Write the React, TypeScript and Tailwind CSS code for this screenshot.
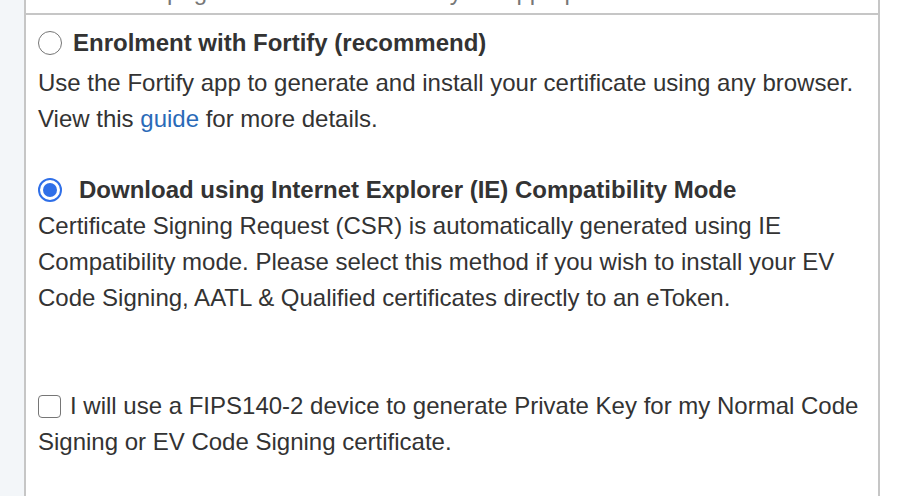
import React from "react";

const font = { fontFamily: '"Liberation Sans", Arial, sans-serif' };

function Radio({ checked }: { checked?: boolean }) {
  if (checked) {
    return (
      <span className="inline-flex h-[24px] w-[24px] shrink-0 items-center justify-center rounded-full border-[2px] border-[#2f6fe8] bg-white">
        <span className="h-[14px] w-[14px] rounded-full bg-[#2f6fe8]" />
      </span>
    );
  }
  return <span className="inline-block h-[24px] w-[24px] shrink-0 rounded-full border-[1.5px] border-[#767676] bg-white" />;
}

export default function App() {
  return (
    <div className="flex h-[496px] w-[912px] overflow-hidden bg-white text-[#333]" style={font}>
      <div className="w-[26px] shrink-0 border-r-2 border-[#c6c6c6] bg-[#f3f6f9]" />
      <div className="flex w-[854px] shrink-0 flex-col border-r-2 border-[#c6c6c6]">
        <div className="flex h-[15px] items-end overflow-hidden border-b-2 border-[#c6c6c6] px-[12px]">
          <div className="mb-[7px] whitespace-nowrap text-[24px] leading-[28px] text-[#777]">
            Code : This page will be reloaded with your appropriate account.
          </div>
        </div>
        <div className="px-[12px] pt-[10px] text-[24px] leading-[36px]">
          <div className="mb-[4px] flex items-center">
            <Radio />
            <span className="ml-[11px] font-bold">Enrolment with Fortify (recommend)</span>
          </div>
          <div>Use the Fortify app to generate and install your certificate using any browser.</div>
          <div>
            View this <span className="text-[#2a6ab8]">guide</span> for more details.
          </div>
          <div className="mt-[35px] flex items-center">
            <Radio checked />
            <span className="ml-[17px] font-bold">Download using Internet Explorer (IE) Compatibility Mode</span>
          </div>
          <div>
            Certificate Signing Request (CSR) is automatically generated using IE Compatibility mode. Please select this method if you wish to install your EV Code Signing, AATL &amp; Qualified certificates directly to an eToken.
          </div>
          <div className="mt-[72px] flex items-center">
            <span className="inline-block h-[23px] w-[23px] shrink-0 rounded-[4px] border-[1.5px] border-[#767676] bg-white" />
            <span className="ml-[9px]">I will use a FIPS140-2 device to generate Private Key for my Normal Code</span>
          </div>
          <div>Signing or EV Code Signing certificate.</div>
        </div>
      </div>
      <div className="flex-1" />
    </div>
  );
}
